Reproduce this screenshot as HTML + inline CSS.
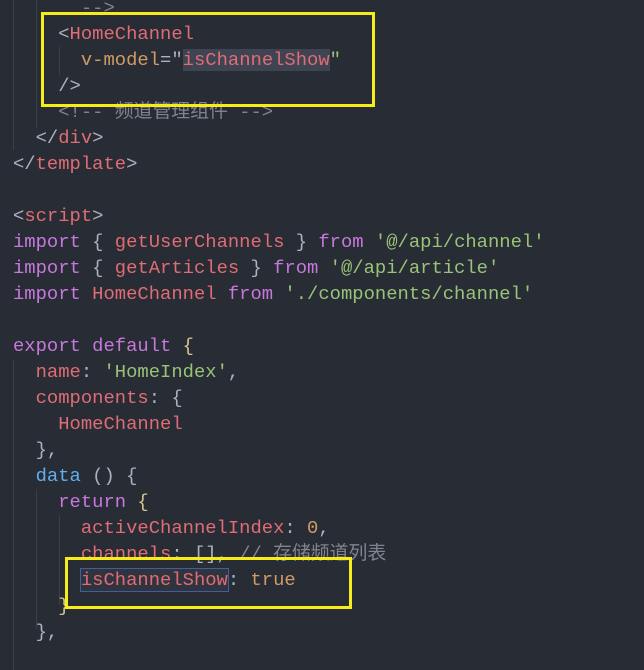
<!DOCTYPE html>
<html><head><meta charset="utf-8"><style>
html,body{margin:0;padding:0;background:#282c34;width:644px;height:670px;overflow:hidden}
.c{position:relative;width:644px;height:670px;font-family:"Liberation Mono","Noto Sans CJK SC",monospace;font-size:18.85px;color:#abb2bf}
.l{position:absolute;left:13px;height:26px;line-height:26px;white-space:pre}
.r{color:#e06c75}.p{color:#c678dd}.g{color:#98c379}.o{color:#d19a66}.b{color:#61afef}.m{color:#7f848e}.y{color:#d8c58f}
.gd{position:absolute;width:1px;background:#3b4048}
.box{position:absolute;border:3px solid #f5ec1a;box-sizing:border-box}
</style></head><body><div class="c">
<div class="gd" style="left:13px;top:0;height:150px"></div>
<div class="gd" style="left:36px;top:0;height:128px"></div>
<div class="gd" style="left:59px;top:47px;height:28px"></div>
<div class="gd" style="left:13px;top:360px;height:310px"></div>
<div class="gd" style="left:36px;top:489px;height:140px"></div>
<div class="gd" style="left:59px;top:515px;height:90px"></div>
<div class="l m" style="top:-5px">      --&gt;</div>
<div class="l" style="top:21px">    &lt;<span class="r">HomeChannel</span></div>
<div class="l" style="top:47px">      <span class="o">v-model</span>="<span class="r" style="background:#3e4452">isChannelShow</span><span class="g">"</span></div>
<div class="l" style="top:73px">    /&gt;</div>
<div class="l m" style="top:99px">    &lt;!-- 频道管理组件 --&gt;</div>
<div class="l" style="top:125px">  &lt;/<span class="r">div</span>&gt;</div>
<div class="l" style="top:151px">&lt;/<span class="r">template</span>&gt;</div>
<div class="l" style="top:203px">&lt;<span class="r">script</span>&gt;</div>
<div class="l" style="top:229px"><span class="p">import</span> { <span class="r">getUserChannels</span> } <span class="p">from</span> <span class="g">'@/api/channel'</span></div>
<div class="l" style="top:255px"><span class="p">import</span> { <span class="r">getArticles</span> } <span class="p">from</span> <span class="g">'@/api/article'</span></div>
<div class="l" style="top:281px"><span class="p">import</span> <span class="r">HomeChannel</span> <span class="p">from</span> <span class="g">'./components/channel'</span></div>
<div class="l" style="top:333px"><span class="p">export</span> <span class="p">default</span> <span class="y">{</span></div>
<div class="l" style="top:359px">  <span class="r">name</span>: <span class="g">'HomeIndex'</span>,</div>
<div class="l" style="top:385px">  <span class="r">components</span>: {</div>
<div class="l" style="top:411px">    <span class="r">HomeChannel</span></div>
<div class="l" style="top:437px">  },</div>
<div class="l" style="top:463px">  <span class="b">data</span> () {</div>
<div class="l" style="top:489px">    <span class="p">return</span> <span class="y">{</span></div>
<div class="l" style="top:515px">      <span class="r">activeChannelIndex</span>: <span class="o">0</span>,</div>
<div class="l" style="top:541px">      <span class="r">channels</span>: [], <span class="m">// 存储频道列表</span></div>
<div class="l" style="top:567px">      <span class="r" style="outline:1px solid #3d5f9e;background:#30343f">isChannelShow</span>: <span class="o">true</span></div>
<div class="l" style="top:593px">    <span class="y">}</span></div>
<div class="l" style="top:619px">  },</div>
<div class="box" style="left:41px;top:12px;width:334px;height:95px"></div>
<div class="box" style="left:65px;top:557px;width:287px;height:52px"></div>
</div></body></html>
